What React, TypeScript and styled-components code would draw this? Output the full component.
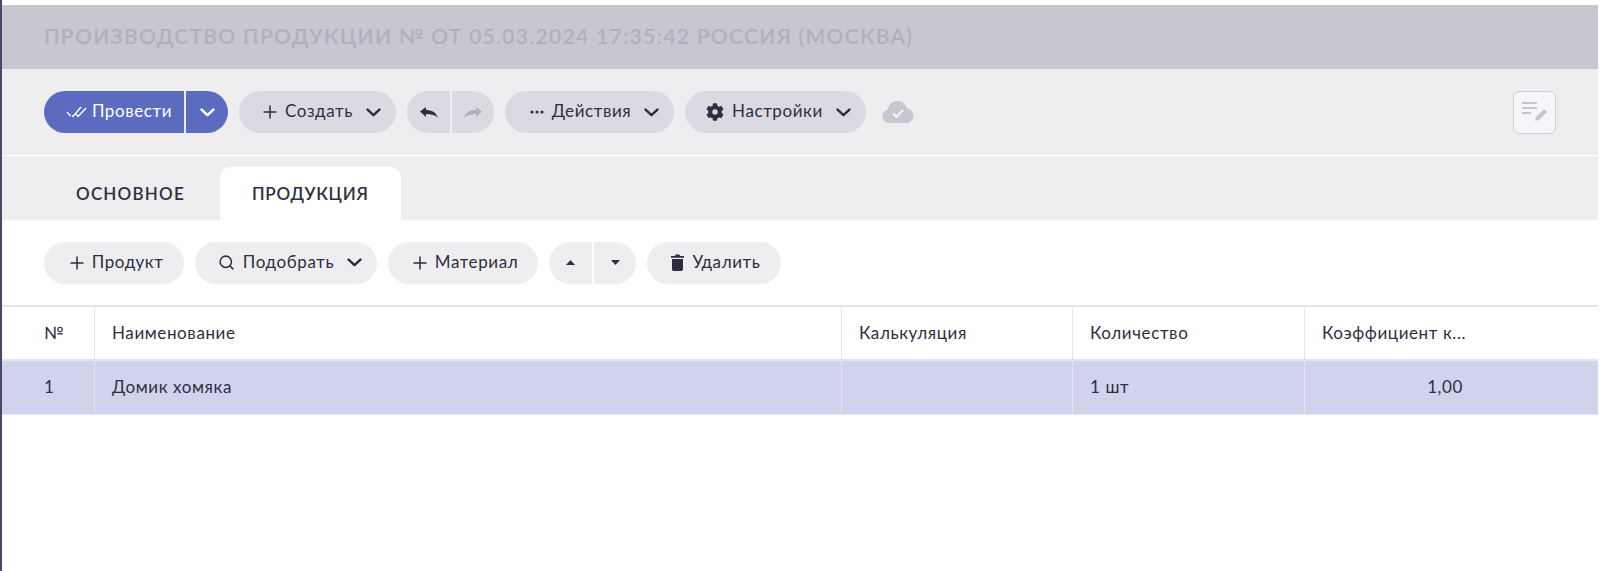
import React from "react";
import styled, { createGlobalStyle } from "styled-components";
import { FaCog } from "react-icons/fa";
import { Search } from "lucide-react";

const Chevron = ({ color = "#2f2e41" }: { color?: string }) => (
  <svg width="15" height="9" viewBox="0 0 15 9" fill="none">
    <path d="M1.6 1.6l5.9 5.6 5.9-5.6" stroke={color} strokeWidth="2.5" strokeLinecap="round" strokeLinejoin="round" />
  </svg>
);

const PlusIcon = () => (
  <svg width="14" height="14" viewBox="0 0 14 14" fill="none">
    <path d="M7 .5v13M.5 7h13" stroke="#2f2e41" strokeWidth="1.5" />
  </svg>
);

const DoubleCheck = () => (
  <svg width="21" height="12" viewBox="0 0 21 12" fill="none">
    <path d="M1 6l3.5 4M6 9.5l1 1L15 1M9 7l3 3.5L20 2" stroke="#fff" strokeWidth="1.3" />
  </svg>
);

const UndoIcon = ({ color }: { color: string }) => (
  <svg width="18" height="11" viewBox="0 0 18 11">
    <path d="M0 4.5L6 0v3c5.5 0 10 2 12 8-2.5-3-6.5-4-12-4v3z" fill={color} />
  </svg>
);

const EllipsisIcon = () => (
  <svg width="14" height="4" viewBox="0 0 14 4">
    <circle cx="2" cy="2" r="1.6" fill="#2f2e41" />
    <circle cx="7" cy="2" r="1.6" fill="#2f2e41" />
    <circle cx="12" cy="2" r="1.6" fill="#2f2e41" />
  </svg>
);

const TrashIcon = () => (
  <svg width="13" height="17" viewBox="0 0 13 17">
    <path d="M0 2h4l.6-1.5h3.8L9 2h4v1.8H0z" fill="#2f2e41" />
    <path d="M1 5h11v10.3a1.7 1.7 0 0 1-1.7 1.7H2.7A1.7 1.7 0 0 1 1 15.3z" fill="#2f2e41" />
  </svg>
);

const CaretUp = () => (
  <svg width="9" height="5" viewBox="0 0 9 5">
    <path d="M4.5 0L9 5H0z" fill="#2f2e41" />
  </svg>
);

const CaretDown = () => (
  <svg width="9" height="5" viewBox="0 0 9 5">
    <path d="M4.5 5L0 0h9z" fill="#2f2e41" />
  </svg>
);

const CloudCheck = () => (
  <svg width="32" height="22" viewBox="0 0 32 22">
    <path
      d="M7 22a6.6 6.6 0 0 1-1.6-13A10 10 0 0 1 16 0a9.6 9.6 0 0 1 9 7.4A7.4 7.4 0 0 1 25.5 22z"
      fill="#c8c6d0"
    />
    <path d="M11 12.5l3.4 3.4 6.6-6.8" stroke="#f4f4f6" strokeWidth="2.2" fill="none" />
  </svg>
);

const NoteIcon = () => (
  <svg width="26" height="22" viewBox="0 0 26 22" fill="none">
    <path d="M0 2h15M0 7h15M0 12h9" stroke="#c8c6d0" strokeWidth="2.2" />
    <path d="M13 20l1-4 8-8 3 3-8 8z" fill="#c8c6d0" />
  </svg>
);

const App = () => (
  <Page>
    <GlobalStyle />
    <Header>
      <Title>ПРОИЗВОДСТВО ПРОДУКЦИИ № ОТ 05.03.2024 17:35:42 РОССИЯ (МОСКВА)</Title>
    </Header>
    <MainToolbar>
      <SplitButton>
        <PrimaryPart $width={140} $pad={10}>
          <DoubleCheck />
          <Label>Провести</Label>
        </PrimaryPart>
        <PrimaryPart $width={42}>
          <Chevron color="#fff" />
        </PrimaryPart>
      </SplitButton>
      <Pill $width={157} $pad={9}>
        <PlusIcon />
        <Label>Создать</Label>
        <ChevronSlot><Chevron /></ChevronSlot>
      </Pill>
      <SplitButton>
        <Segment $width={43}><UndoIcon color="#2f2e41" /></Segment>
        <Segment $width={42}><MutedIcon><UndoIcon color="#aeadba" /></MutedIcon></Segment>
      </SplitButton>
      <Pill $width={169} $pad={10}>
        <EllipsisIcon />
        <Label>Действия</Label>
        <ChevronSlot><Chevron /></ChevronSlot>
      </Pill>
      <Pill $width={181} $pad={6}>
        <FaCog size={18} color="#2f2e41" />
        <Label>Настройки</Label>
        <ChevronSlot><Chevron /></ChevronSlot>
      </Pill>
      <CloudSlot><CloudCheck /></CloudSlot>
      <NoteButton><NoteIcon /></NoteButton>
    </MainToolbar>
    <Tabs>
      <Tab>ОСНОВНОЕ</Tab>
      <Tab $active>ПРОДУКЦИЯ</Tab>
    </Tabs>
    <SubToolbar>
      <LightPill $width={140} $pad={5}><PlusIcon /><Label>Продукт</Label></LightPill>
      <LightPill $width={182} $pad={8}>
        <Search size={17} color="#2f2e41" strokeWidth={2.2} />
        <Label>Подобрать</Label>
        <ChevronSlot><Chevron /></ChevronSlot>
      </LightPill>
      <LightPill $width={150} $pad={5}><PlusIcon /><Label>Материал</Label></LightPill>
      <SplitButton>
        <LightSegment $width={43}><CaretUp /></LightSegment>
        <LightSegment $width={42}><CaretDown /></LightSegment>
      </SplitButton>
      <LightPill $width={134} $pad={4}>
        <TrashIcon />
        <Label>Удалить</Label>
      </LightPill>
    </SubToolbar>
    <Table>
      <HeadCell>№</HeadCell>
      <HeadCell>Наименование</HeadCell>
      <HeadCell>Калькуляция</HeadCell>
      <HeadCell>Количество</HeadCell>
      <HeadCell>Коэффициент к...</HeadCell>
      <RowCell>1</RowCell>
      <RowCell>Домик хомяка</RowCell>
      <RowCell />
      <RowCell>1 шт</RowCell>
      <RowCell $right>1,00</RowCell>
    </Table>
  </Page>
);

const GlobalStyle = createGlobalStyle`
  html, body {
    margin: 0;
    padding: 0;
    background: #fff;
  }
  body {
    font-family: "Lato", "Noto Sans", sans-serif;
    color: #2f2e41;
  }
`;

const Page = styled.div`
  box-sizing: border-box;
  width: 1598px;
  height: 571px;
  padding-top: 5px;
  border-left: 2px solid #4a4868;
  font-size: 17px;
  letter-spacing: 0.6px;
`;

const Header = styled.header`
  height: 64px;
  box-sizing: border-box;
  display: flex;
  align-items: center;
  padding: 0 0 4px 42px;
  background: #c8c6d0;
`;

const Title = styled.h1`
  margin: 0;
  font-size: 21px;
  font-weight: 600;
  letter-spacing: 1.3px;
  color: #b1b0bf;
`;

const MainToolbar = styled.div`
  height: 87px;
  box-sizing: border-box;
  display: flex;
  align-items: center;
  gap: 11px;
  padding: 0 42px;
  background: #eeeef0;
  border-bottom: 1px solid #fff;
`;

const SplitButton = styled.div`
  display: flex;
  gap: 2px;
  height: 42px;
  border-radius: 21px;
  overflow: hidden;
`;

const Label = styled.span`
  padding-bottom: 3px;
`;

const PrimaryPart = styled.div<{ $width: number; $pad?: number }>`
  box-sizing: border-box;
  width: ${({ $width }) => $width}px;
  padding-left: ${({ $pad }) => $pad ?? 0}px;
  display: flex;
  align-items: center;
  justify-content: center;
  gap: 5px;
  background: #5b6cc0;
  color: #fff;
`;

const Segment = styled.div<{ $width: number }>`
  width: ${({ $width }) => $width}px;
  display: flex;
  align-items: center;
  justify-content: center;
  background: #dbdae2;
`;

const LightSegment = styled(Segment)`
  background: #eeeef0;
`;

const MutedIcon = styled.span`
  display: flex;
  transform: scaleX(-1);
`;

const Pill = styled.div<{ $width: number; $pad: number }>`
  box-sizing: border-box;
  width: ${({ $width }) => $width}px;
  height: 42px;
  padding-left: ${({ $pad }) => $pad}px;
  display: flex;
  align-items: center;
  justify-content: center;
  gap: 8px;
  border-radius: 21px;
  background: #dbdae2;
`;

const LightPill = styled(Pill)`
  background: #eeeef0;
`;

const ChevronSlot = styled.span`
  display: flex;
  margin-left: 5px;
`;

const CloudSlot = styled.span`
  display: flex;
  margin-left: 5px;
`;

const NoteButton = styled.div`
  box-sizing: border-box;
  width: 43px;
  height: 43px;
  margin-left: auto;
  display: flex;
  align-items: center;
  justify-content: center;
  border: 1.5px solid #d0cfd9;
  border-radius: 6px;
  background: #f6f6f8;
`;

const Tabs = styled.nav`
  height: 64px;
  box-sizing: border-box;
  display: flex;
  align-items: flex-end;
  gap: 3px;
  padding-left: 42px;
  background: #eeeef0;
`;

const Tab = styled.div<{ $active?: boolean }>`
  height: 53px;
  display: flex;
  align-items: center;
  padding: 0 32px;
  border-radius: 10px 10px 0 0;
  font-size: 17px;
  font-weight: 600;
  letter-spacing: ${({ $active }) => ($active ? "0.8px" : "1.2px")};
  background: ${({ $active }) => ($active ? "#fff" : "transparent")};
`;

const SubToolbar = styled.div`
  height: 85px;
  box-sizing: border-box;
  display: flex;
  align-items: center;
  gap: 11px;
  padding: 0 42px;
`;

const Table = styled.div`
  display: grid;
  grid-template-columns: 93px 747px 231px 232px 1fr;
  grid-auto-rows: 54px;
  border-top: 2px solid #e6e5ee;
`;

const HeadCell = styled.div`
  box-sizing: border-box;
  display: flex;
  align-items: center;
  padding-left: 17px;
  padding-bottom: 2px;
  border-right: 1px solid #e6e5ee;
  border-bottom: 2px solid #e6e5ee;

  &:first-child {
    padding-left: 42px;
  }
  &:nth-child(5) {
    border-right: 0;
  }
`;

const RowCell = styled.div<{ $right?: boolean }>`
  box-sizing: border-box;
  display: flex;
  align-items: center;
  justify-content: ${({ $right }) => ($right ? "flex-end" : "flex-start")};
  padding-left: 17px;
  padding-right: ${({ $right }) => ($right ? "135px" : "0")};
  padding-bottom: 2px;
  background: #cfd4ec;
  border-right: 1px solid #e6e5ee;
  border-bottom: 1px solid #e6e5ee;

  &:nth-child(6) {
    padding-left: 42px;
  }
  &:nth-child(10) {
    border-right: 0;
  }
`;

export default App;
